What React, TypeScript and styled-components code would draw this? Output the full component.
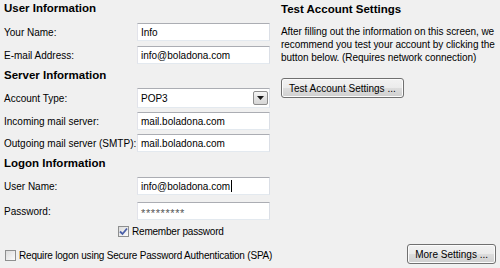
import React from "react";
import styled, { createGlobalStyle } from "styled-components";

const GlobalStyle = createGlobalStyle`
  html, body {
    margin: 0;
    padding: 0;
    background: #f0f0f0;
  }
  body {
    font-family: "Liberation Sans", Arial, sans-serif;
    font-size: 10px;
    color: #000000;
  }
`;

const Screen = styled.div`
  width: 500px;
  height: 268px;
  display: flex;
  box-sizing: border-box;
  background: #f0f0f0;
  overflow: hidden;
`;

const LeftColumn = styled.div`
  width: 277px;
  padding-left: 4px;
  box-sizing: border-box;
  display: flex;
  flex-direction: column;
`;

const RightColumn = styled.div`
  flex: 1;
  padding-left: 4px;
  padding-right: 4px;
  display: flex;
  flex-direction: column;
`;

const Heading = styled.div<{ $top?: number }>`
  height: 16px;
  line-height: 16px;
  margin-top: ${(p) => p.$top ?? 0}px;
  font-weight: bold;
  font-size: 11.5px;
`;

const Row = styled.div<{ $top: number; $height?: number }>`
  display: flex;
  align-items: center;
  height: ${(p) => p.$height ?? 18}px;
  margin-top: ${(p) => p.$top}px;
`;

const Label = styled.div`
  width: 133px;
  white-space: nowrap;
`;

const TextBox = styled.div`
  width: 133px;
  height: 100%;
  box-sizing: border-box;
  background: #ffffff;
  border: 1px solid #abadb3;
  border-left-color: #e2e3ea;
  border-right-color: #dbdfe6;
  border-bottom-color: #e3e9ef;
  display: flex;
  align-items: center;
  padding-left: 3px;
  white-space: nowrap;
`;

const Masked = styled.span`
  font-size: 11px;
  letter-spacing: 0.6px;
  color: #555555;
  padding-top: 3px;
`;

const Caret = styled.span`
  display: inline-block;
  width: 1px;
  height: 12px;
  background: #000000;
  margin-left: 1px;
`;

const Select = styled(TextBox)`
  justify-content: space-between;
  padding-right: 1px;
`;

const DropButton = styled.div`
  width: 15px;
  height: 14px;
  box-sizing: border-box;
  border: 1px solid #8d8d8d;
  border-radius: 2px;
  background: linear-gradient(#f6f6f6, #e3e3e3 50%, #d6d6d6);
  display: flex;
  align-items: center;
  justify-content: center;
`;

const CheckRow = styled.div<{ $top: number; $indent?: number }>`
  display: flex;
  align-items: center;
  gap: 3px;
  height: 12px;
  margin-top: ${(p) => p.$top}px;
  padding-left: ${(p) => p.$indent ?? 0}px;
  white-space: nowrap;
  font-size: 10px;
  letter-spacing: -0.2px;
`;

const Box = styled.span`
  flex-shrink: 0;
  width: 11px;
  height: 11px;
  box-sizing: border-box;
  border: 1px solid #8e8f8f;
  background: linear-gradient(135deg, #dcdcdc, #fbfbfb);
  display: inline-flex;
  align-items: center;
  justify-content: center;
`;

const Paragraph = styled.p`
  margin: 8px 0 0 0;
  line-height: 13px;
  white-space: nowrap;
  letter-spacing: -0.05px;
`;

const Button = styled.button<{ $top?: number }>`
  align-self: flex-start;
  margin-top: ${(p) => p.$top ?? 0}px;
  height: 20px;
  padding: 0 7px;
  font-family: "Liberation Sans", Arial, sans-serif;
  font-size: 10px;
  color: #000000;
  border: 1px solid #707070;
  border-radius: 3px;
  background: linear-gradient(#f2f2f2, #ebebeb 50%, #dddddd 51%, #cfcfcf);
  box-shadow: inset 0 0 0 1px #fcfcfc;
`;

const BottomButton = styled(Button)`
  align-self: flex-end;
  margin-top: auto;
  margin-bottom: 4px;
`;

function Check() {
  return (
    <svg width="9" height="9" viewBox="0 0 9 9">
      <path
        d="M1 4.5 L3.5 7 L8 1.5"
        fill="none"
        stroke="#4a5fa8"
        strokeWidth="1.8"
      />
    </svg>
  );
}

export default function App() {
  return (
    <>
      <GlobalStyle />
      <Screen>
        <LeftColumn>
          <Heading>User Information</Heading>
          <Row $top={7}>
            <Label>Your Name:</Label>
            <TextBox>Info</TextBox>
          </Row>
          <Row $top={5}>
            <Label>E-mail Address:</Label>
            <TextBox>info@boladona.com</TextBox>
          </Row>

          <Heading $top={3}>Server Information</Heading>
          <Row $top={5} $height={20}>
            <Label>Account Type:</Label>
            <Select>
              POP3
              <DropButton>
                <svg width="7" height="4" viewBox="0 0 7 4">
                  <path d="M0 0 H7 L3.5 4 Z" fill="#1a1a1a" />
                </svg>
              </DropButton>
            </Select>
          </Row>
          <Row $top={4}>
            <Label>Incoming mail server:</Label>
            <TextBox>mail.boladona.com</TextBox>
          </Row>
          <Row $top={4}>
            <Label>Outgoing mail server (SMTP):</Label>
            <TextBox>mail.boladona.com</TextBox>
          </Row>

          <Heading $top={3}>Logon Information</Heading>
          <Row $top={6}>
            <Label>User Name:</Label>
            <TextBox>
              info@boladona.com
              <Caret />
            </TextBox>
          </Row>
          <Row $top={7}>
            <Label>Password:</Label>
            <TextBox>
              <Masked>*********</Masked>
            </TextBox>
          </Row>
          <CheckRow $top={5} $indent={114}>
            <Box>
              <Check />
            </Box>
            Remember password
          </CheckRow>
          <CheckRow $top={12} $indent={1}>
            <Box />
            Require logon using Secure Password Authentication (SPA)
          </CheckRow>
        </LeftColumn>

        <RightColumn>
          <Heading $top={1}>Test Account Settings</Heading>
          <Paragraph>
            After filling out the information on this screen, we
            <br />
            recommend you test your account by clicking the
            <br />
            button below. (Requires network connection)
          </Paragraph>
          <Button $top={14}>Test Account Settings ...</Button>
          <BottomButton>More Settings ...</BottomButton>
        </RightColumn>
      </Screen>
    </>
  );
}
